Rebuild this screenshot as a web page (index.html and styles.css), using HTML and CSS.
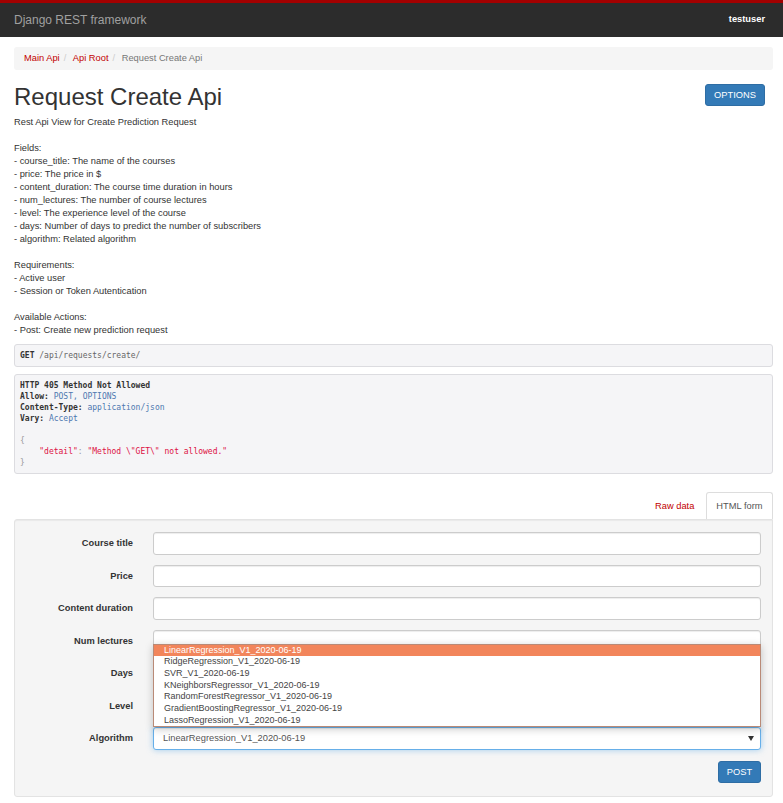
FILE: index.html
```html
<!DOCTYPE html>
<html lang="en">
<head>
<meta charset="utf-8">
<title>Request Create Api – Django REST framework</title>
<link rel="stylesheet" href="styles.css">
</head>
<body>
<div class="grid-bg"></div>
<header class="navbar">
  <a class="brand" href="#">Django REST framework</a>
  <span class="user">testuser</span>
</header>
<main class="container">
  <ul class="breadcrumb">
    <li><a href="#">Main Api</a></li>
    <li><a href="#">Api Root</a></li>
    <li class="active">Request Create Api</li>
  </ul>

  <div class="content-head">
    <h1>Request Create Api</h1>
    <button class="btn btn-primary btn-options" type="button">OPTIONS</button>
  </div>

  <div class="description">
    <p>Rest Api View for Create Prediction Request</p>
    <p>Fields:<br>- course_title: The name of the courses<br>- price: The price in $<br>- content_duration: The course time duration in hours<br>- num_lectures: The number of course lectures<br>- level: The experience level of the course<br>- days: Number of days to predict the number of subscribers<br>- algorithm: Related algorithm</p>
    <p>Requirements:<br>- Active user<br>- Session or Token Autentication</p>
    <p>Available Actions:<br>- Post: Create new prediction request</p>
  </div>

  <pre class="code request-info"><b>GET</b> <span class="path">/api/requests/create/</span></pre>

  <pre class="code response-info"><b>HTTP 405 Method Not Allowed</b>
<b>Allow:</b> <span class="lit">POST, OPTIONS</span>
<b>Content-Type:</b> <span class="lit">application/json</span>
<b>Vary:</b> <span class="lit">Accept</span>

<span class="pun">{</span>
    <span class="str">"detail"</span><span class="pun">: </span><span class="str">"Method \"GET\" not allowed."</span>
<span class="pun">}</span></pre>

  <ul class="tabs">
    <li><a href="#">Raw data</a></li>
    <li class="active"><a href="#">HTML form</a></li>
  </ul>

  <form class="well">
    <label class="lbl">Course title</label>
    <input class="input" type="text">
    <label class="lbl">Price</label>
    <input class="input" type="text">
    <label class="lbl">Content duration</label>
    <input class="input" type="text">
    <label class="lbl">Num lectures</label>
    <input class="input" type="text">
    <label class="lbl">Days</label>
    <input class="input" type="text">
    <label class="lbl">Level</label>
    <input class="input" type="text">
    <label class="lbl">Algorithm</label>
    <div class="select-wrap">
      <ul class="dropdown">
        <li class="hl">LinearRegression_V1_2020-06-19</li>
        <li>RidgeRegression_V1_2020-06-19</li>
        <li>SVR_V1_2020-06-19</li>
        <li>KNeighborsRegressor_V1_2020-06-19</li>
        <li>RandomForestRegressor_V1_2020-06-19</li>
        <li>GradientBoostingRegressor_V1_2020-06-19</li>
        <li>LassoRegression_V1_2020-06-19</li>
      </ul>
      <div class="select">
        <span>LinearRegression_V1_2020-06-19</span>
        <svg class="arrow" width="6" height="5" viewBox="0 0 6 5"><path d="M0 0H6L3 5Z" fill="#333"/></svg>
      </div>
    </div>
    <div class="actions">
      <button class="btn btn-primary btn-post" type="button">POST</button>
    </div>
  </form>
</main>
</body>
</html>
```

FILE: styles.css
```css
html, body {
  margin: 0;
  padding: 0;
  background: #fff;
}
body {
  font-family: "Liberation Sans", Arial, sans-serif;
  font-size: 9.3px;
  line-height: 13px;
  color: #333;
  position: relative;
}
a { text-decoration: none; }

.grid-bg {
  position: absolute;
  top: 37px;
  left: 0;
  right: 0;
  height: 240px;
  z-index: -1;
  background-image:
    linear-gradient(to right, #ececec 1px, transparent 1px),
    linear-gradient(to bottom, #ececec 1px, transparent 1px);
  background-size: 12px 12px;
  background-position: 3px 11px;
  -webkit-mask-image: linear-gradient(to bottom, rgba(0,0,0,1) 0%, rgba(0,0,0,0.5) 45%, rgba(0,0,0,0) 100%);
  mask-image: linear-gradient(to bottom, rgba(0,0,0,1) 0%, rgba(0,0,0,0.5) 45%, rgba(0,0,0,0) 100%);
}

.navbar {
  border-top: 3px solid #a30000;
  background: #2c2c2c;
  height: 34px;
  display: flex;
  align-items: center;
  justify-content: space-between;
  padding: 0 18px 0 14px;
}
.brand {
  color: #a0a0a0;
  font-size: 12px;
  line-height: 14px;
  margin-top: -1px;
}
.user {
  color: #fff;
  font-weight: bold;
  font-size: 9.3px;
  margin-top: -1px;
}

.container {
  padding: 0 10px 0 14px;
}

.breadcrumb {
  list-style: none;
  margin: 10px 0 0;
  padding: 0 10px;
  height: 23px;
  line-height: 23px;
  background: #f5f5f5;
  border-radius: 3px;
  display: flex;
}
.breadcrumb li + li::before {
  content: "/\00a0";
  padding: 0 4px;
  color: #ccc;
}
.breadcrumb a { color: #c20000; }
.breadcrumb .active { color: #777; }

.content-head {
  display: flex;
  justify-content: space-between;
  align-items: flex-start;
  margin-top: 13.5px;
}
h1 {
  margin: 0;
  font-size: 24px;
  line-height: 26.4px;
  font-weight: normal;
  color: #333;
}
.btn {
  font-family: "Liberation Sans", Arial, sans-serif;
  font-size: 9.3px;
  color: #fff;
  border-radius: 3px;
  height: 22px;
  padding: 0 8px;
  line-height: 20px;
  cursor: pointer;
}
.btn-primary {
  background: #337ab7;
  border: 1px solid #2e6da4;
}
.btn-options {
  margin-right: 8px;
  margin-top: 0.5px;
  width: 60px;
}

.description {
  margin-top: 6px;
}
.description p {
  margin: 0 0 13px;
}
.description p:last-child {
  margin-bottom: 7px;
}

.code {
  margin: 0;
  font-family: "DejaVu Sans Mono", "Liberation Mono", monospace;
  font-size: 8px;
  line-height: 11px;
  background: #f5f5f7;
  border: 1px solid #dcdce0;
  border-radius: 3px;
  padding: 5px;
  color: #444;
  white-space: pre;
}
.code b { color: #333; }
.request-info .path { color: #666; }
.response-info {
  margin-top: 7px;
}
.lit { color: #4d78b0; }
.pun { color: #999; }
.str { color: #d14; }

.tabs {
  list-style: none;
  margin: 18px 0 0;
  padding: 0;
  display: flex;
  justify-content: flex-end;
  gap: 1px;
}
.tabs li {
  height: 27px;
  box-sizing: border-box;
  line-height: 26px;
  padding: 0 9.5px;
  border: 1px solid transparent;
  border-bottom: 0;
  border-radius: 3px 3px 0 0;
}
.tabs a { color: #c20000; }
.tabs li.active {
  background: #fff;
  border-color: #ddd;
}
.tabs li.active a { color: #555; }

.well {
  margin: 0;
  background: #f5f5f5;
  border: 1px solid #e3e3e3;
  border-radius: 3px 0 3px 3px;
  box-shadow: inset 0 1px 1px rgba(0,0,0,.05);
  padding: 12px 11px 13px 0;
  display: grid;
  grid-template-columns: 138px 1fr;
  row-gap: 10px;
}
.lbl {
  font-weight: bold;
  text-align: right;
  padding-right: 20px;
  height: 22.6px;
  line-height: 22.6px;
  white-space: nowrap;
}
.input, .select {
  display: block;
  box-sizing: border-box;
  width: 100%;
  height: 22.6px;
  margin: 0;
  border: 1px solid #ccc;
  border-radius: 3px;
  background: #fff;
  box-shadow: inset 0 1px 1px rgba(0,0,0,.075);
  font-family: "Liberation Sans", Arial, sans-serif;
  font-size: 9.3px;
}
.select-wrap {
  position: relative;
}
.select {
  border-color: #66afe9;
  box-shadow: inset 0 1px 1px rgba(0,0,0,.075), 0 0 6px rgba(102,175,233,.6);
  display: flex;
  align-items: center;
  justify-content: space-between;
  padding: 0 6px 0 9px;
  color: #555;
}
.arrow { display: block; }

.dropdown {
  position: absolute;
  left: 0;
  right: 0;
  bottom: 100%;
  margin: 0;
  padding: 0;
  list-style: none;
  background: #fff;
  border: 1px solid #b98a77;
  box-shadow: 0 2px 8px rgba(0,0,0,.22);
  z-index: 5;
}
.dropdown li {
  height: 11.7px;
  line-height: 11.7px;
  padding-left: 10px;
  font-size: 9px;
  color: #444;
  white-space: nowrap;
}
.dropdown li.hl {
  background: #f2855b;
  color: #fff;
}

.actions {
  grid-column: 2;
  display: flex;
  justify-content: flex-end;
  margin-top: 0.5px;
}
.btn-post {
  width: 43px;
  padding: 0;
}
```
